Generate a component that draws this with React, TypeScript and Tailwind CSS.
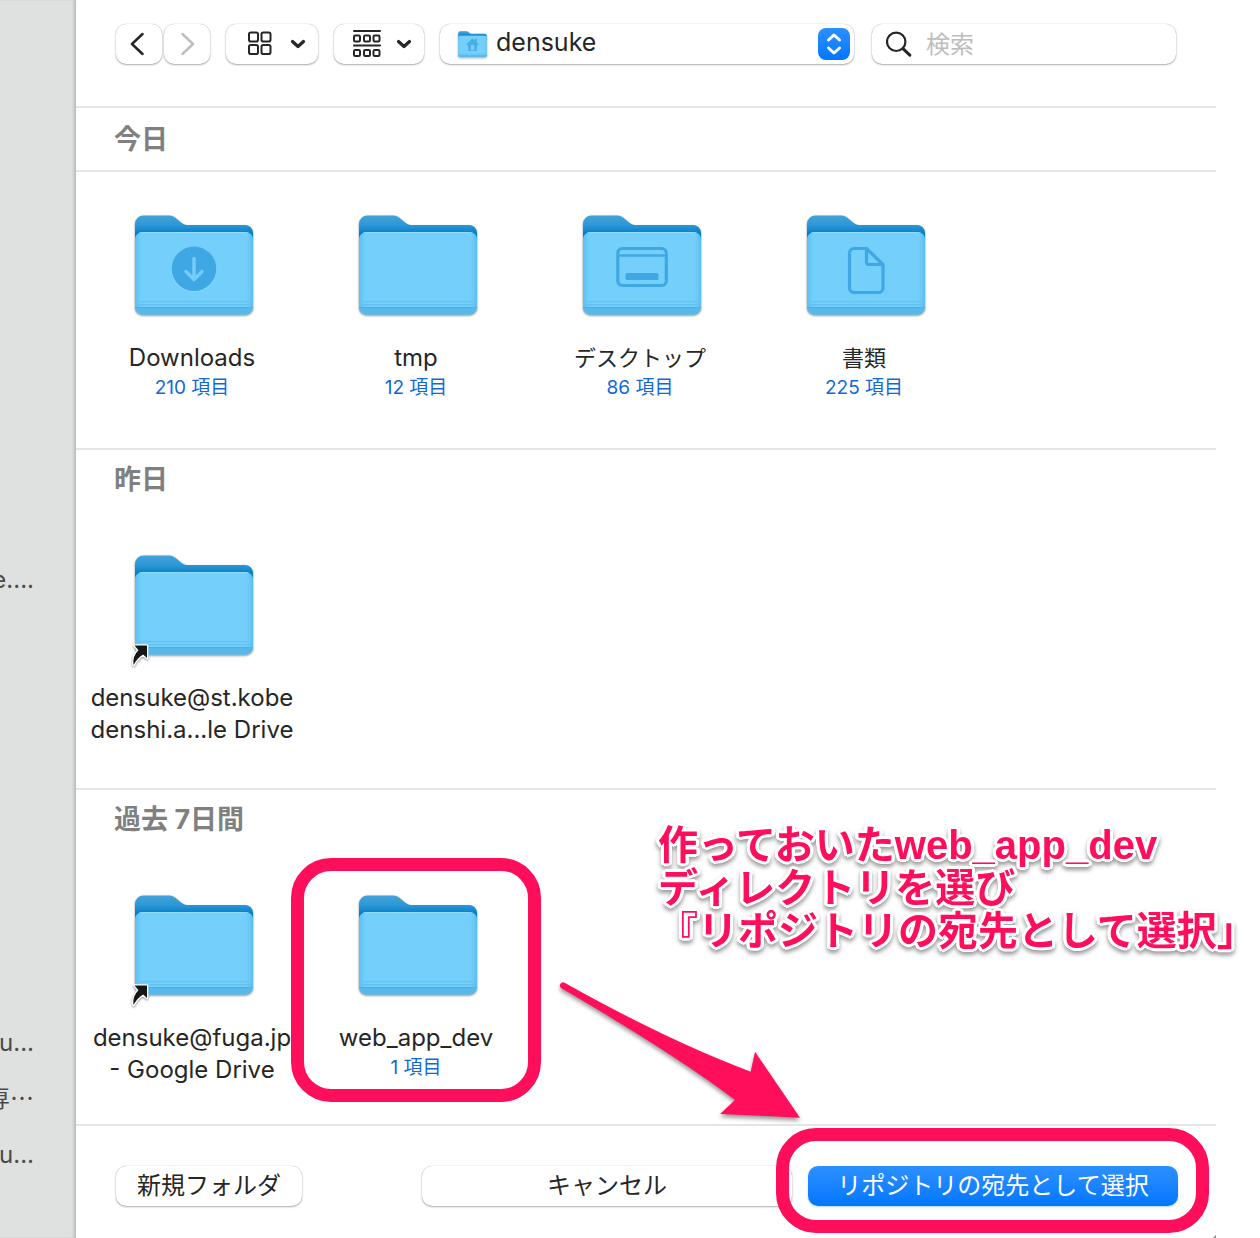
import { useId } from 'react'
import type { ReactNode } from 'react'

type Symbol = 'download' | 'desktop' | 'document' | 'home'

const raised =
  'bg-white shadow-[0_0_1px_rgba(0,0,0,0.35),0_1px_2px_rgba(0,0,0,0.3)]'

function FolderSymbol({ name }: { name: Symbol }) {
  const ink = '#3fa8e4'
  if (name === 'download')
    return (
      <g>
        <circle cx="66" cy="61.6" r="22.5" fill="#8ad7ff" />
        <circle cx="66" cy="60.8" r="22.3" fill={ink} />
        <path
          d="M66 50.500v21M58 63.500l8 8 8-8"
          fill="none"
          stroke="#74cdfb"
          strokeWidth="3.4"
          strokeLinecap="round"
          strokeLinejoin="round"
        />
      </g>
    )
  if (name === 'desktop')
    return (
      <g>
        <g fill="none" stroke={ink} strokeWidth="3.2">
          <rect x="41.800" y="40.500" width="48.500" height="37" rx="4.500" />
          <path d="M42 47.500h48" strokeWidth="2.6" />
        </g>
        <rect x="49.500" y="65" width="33" height="7" rx="1.500" fill={ink} />
      </g>
    )
  if (name === 'document')
    return (
      <path
        d="M66.500 40.500H54a4.500 4.500 0 0 0-4.500 4.500v35a4.500 4.500 0 0 0 4.500 4.500h24.500a4.500 4.500 0 0 0 4.500-4.500V56.500zV54a2.500 2.500 0 0 0 2.500 2.500h14"
        fill="none"
        stroke={ink}
        strokeWidth="3.2"
        strokeLinejoin="round"
      />
    )
  return (
    <path
      fillRule="evenodd"
      d="M66 34 40 58l4 4 4-4v25h36V58l4 4 4-4-8-8V36h-8v7zM59 80V64q0-6 7-6t7 6v16z"
      fill="#4aaee4"
    />
  )
}

function Folder({
  symbol,
  alias,
  small,
}: {
  symbol?: Symbol
  alias?: boolean
  small?: boolean
}) {
  const id = useId()
  return (
    <svg
      viewBox={small ? '6 7 120 102' : '0 0 128 112'}
      preserveAspectRatio="none"
      aria-hidden="true"
      className={
        small
          ? 'h-[27px] w-[29px] overflow-visible drop-shadow-[0_1px_1px_rgba(0,0,0,0.3)]'
          : 'h-28 w-32 overflow-visible drop-shadow-[0_1px_1px_rgba(0,0,0,0.45)]'
      }
    >
      <defs>
        <linearGradient id={id + 'b'} x1="0" y1="7" x2="0" y2="26" gradientUnits="userSpaceOnUse">
          <stop offset="0" stopColor="#45a3da" />
          <stop offset="0.5" stopColor="#2f98d6" />
          <stop offset="1" stopColor="#0080c8" />
        </linearGradient>
        <linearGradient id={id + 'e'} x1="0" y1="0" x2="1" y2="0">
          <stop offset="0" stopColor="#56bdf0" />
          <stop offset="0.07" stopColor="#73cefb" stopOpacity="0" />
          <stop offset="0.93" stopColor="#73cefb" stopOpacity="0" />
          <stop offset="1" stopColor="#56bdf0" />
        </linearGradient>
        <clipPath id={id + 'c'}>
          <rect x="7" y="24" width="118" height="82.500" rx="8" />
        </clipPath>
      </defs>
      <path
        d="M7 40V16a8.500 8.500 0 0 1 8.500-8.500H40c4.500 0 6.500 1.500 9.500 4 4 3.500 6 5.500 11 5.500H117a8 8 0 0 1 8 8v20z"
        fill={`url(#${id}b)`}
      />
      <g clipPath={`url(#${id}c)`}>
        <rect x="6" y="24" width="120" height="83" fill="#74cffb" />
        <rect x="7" y="24" width="118" height="83" fill={`url(#${id}e)`} />
        <rect x="6" y="24" width="120" height="1" fill="#8fdcff" />
        <rect x="6" y="93" width="120" height="1.300" fill="#64c3f3" />
        <rect x="6" y="96" width="120" height="1.300" fill="#60c0f0" />
        <rect x="6" y="99" width="120" height="8" fill="#57b9ea" />
        <rect x="6" y="99" width="120" height="1" fill="#4aafe2" />
      </g>
      {symbol && <FolderSymbol name={symbol} />}
      {alias && (
        <path
          d="M6.500 97.500h12.500v12.500l-3.800-3.500q-5.500 3-9.700 10.500-1.200-9 5-14.700z"
          fill="#161616"
          stroke="#fff"
          strokeWidth="2.6"
          strokeLinejoin="round"
          paintOrder="stroke"
        />
      )}
    </svg>
  )
}

function Tile({
  lines,
  count,
  symbol,
  alias,
  cjk,
  marked,
}: {
  lines: string[]
  count?: string
  symbol?: Symbol
  alias?: boolean
  cjk?: boolean
  marked?: boolean
}) {
  return (
    <li className="relative flex min-h-[200px] w-56 flex-col items-center text-center">
      <Folder symbol={symbol} alias={alias} />
      <div
        className={
          cjk
            ? 'mt-[22px] text-[22px] leading-8'
            : 'mt-[22px] text-[24px] leading-8'
        }
      >
        {lines.map((line) => (
          <div key={line} className="whitespace-nowrap">
            {line}
          </div>
        ))}
      </div>
      {count && (
        <div className="text-[19px] leading-7 text-[#1068d9]">{count} 項目</div>
      )}
      {marked && (
        <span className="pointer-events-none absolute -inset-x-[13px] -top-[30px] -bottom-[14px] z-10 rounded-[40px] border-[13px] border-[#ff0f5b]" />
      )}
    </li>
  )
}

function Heading({ children }: { children: ReactNode }) {
  return (
    <h2 className="flex h-15 items-center pl-[38px] text-[27px] leading-9 font-bold text-[#808080]">
      {children}
    </h2>
  )
}

function Chevron() {
  return (
    <svg viewBox="0 0 16 10" aria-hidden="true" className="h-[10px] w-4">
      <path
        d="M2.500 2.500 8 7.500l5.500-5"
        fill="none"
        stroke="#262626"
        strokeWidth="3.2"
        strokeLinecap="round"
        strokeLinejoin="round"
      />
    </svg>
  )
}

function SidebarItem({ text }: { text: string }) {
  return (
    <li className="flex h-14 items-center justify-end overflow-hidden pr-[42px] whitespace-nowrap">
      {text}
    </li>
  )
}

export default function App() {
  return (
    <div
      lang="ja"
      className="flex min-h-screen bg-white pr-11 font-['Inter','Noto_Sans_CJK_JP',sans-serif] text-[#262626]"
    >
      <aside className="w-[76px] shrink-0 bg-[#dfe1e0] pt-[552px] text-[24px] text-[#4a4c4b] shadow-[inset_-3px_0_3px_-1px_rgba(0,0,0,0.18)]">
        <ul>
          <SidebarItem text="e...." />
        </ul>
        <ul className="mt-[407px]">
          <SidebarItem text="u..." />
          <SidebarItem text="専⋯" />
          <SidebarItem text="u..." />
        </ul>
      </aside>

      <main className="relative min-w-0 flex-1">
        <header className="flex h-[108px] items-start border-b-2 border-[#e5e5e5] pt-6 pr-10 pl-10">
          <button aria-label="戻る" className={`flex h-10 w-[46px] items-center justify-center rounded-[10px] pr-1 ${raised}`}>
            <svg viewBox="0 0 14 24" aria-hidden="true" className="h-6 w-[14px]">
              <path d="M12.500 2 2 12l10.500 10" fill="none" stroke="#262626" strokeWidth="2.5" strokeLinecap="round" strokeLinejoin="round" />
            </svg>
          </button>
          <button aria-label="進む" className={`ml-[2px] flex h-10 w-[46px] items-center justify-center rounded-[10px] pl-[2px] ${raised}`}>
            <svg viewBox="0 0 14 24" aria-hidden="true" className="h-6 w-[14px]">
              <path d="m1.500 2 10.500 10-10.500 10" fill="none" stroke="#bfbfbf" strokeWidth="2.5" strokeLinecap="round" strokeLinejoin="round" />
            </svg>
          </button>
          <button aria-label="表示方法" className={`ml-4 flex h-10 w-[92px] items-center justify-between rounded-[10px] pr-3 pl-[21px] ${raised}`}>
            <svg viewBox="0 0 26 26" aria-hidden="true" className="h-[26px] w-[26px]">
              <g fill="none" stroke="#262626" strokeWidth="2">
                <rect x="2" y="1.500" width="9" height="9" rx="1.800" />
                <rect x="14.500" y="1.500" width="9" height="9" rx="1.800" />
                <rect x="2" y="14" width="9" height="9" rx="1.800" />
                <rect x="14.500" y="14" width="9" height="9" rx="1.800" />
              </g>
            </svg>
            <Chevron />
          </button>
          <button aria-label="グループ分け" className={`ml-4 flex h-10 w-[90px] items-center justify-between rounded-[10px] pr-3 pl-[18px] ${raised}`}>
            <svg viewBox="0 0 30 28" aria-hidden="true" className="h-7 w-[30px]">
              <g fill="none" stroke="#262626" strokeWidth="2">
                <path d="M2 1h26M2 15.500h26" strokeLinecap="round" />
                <rect x="2" y="5.500" width="6" height="6" rx="1.200" />
                <rect x="12" y="5.500" width="6" height="6" rx="1.200" />
                <rect x="21.500" y="5.500" width="6" height="6" rx="1.200" />
                <rect x="2" y="20" width="6" height="6" rx="1.200" />
                <rect x="12" y="20" width="6" height="6" rx="1.200" />
                <rect x="21.500" y="20" width="6" height="6" rx="1.200" />
              </g>
            </svg>
            <Chevron />
          </button>
          <div className={`relative ml-4 h-10 min-w-0 flex-1 rounded-[10px] ${raised}`}>
            <select aria-label="場所" className="h-full w-full appearance-none rounded-[10px] bg-transparent pr-11 pb-[2px] pl-14 text-[25px] outline-none">
              <option>densuke</option>
            </select>
            <span className="pointer-events-none absolute top-[7px] left-[18px]">
              <Folder symbol="home" small />
            </span>
            <span className="pointer-events-none absolute top-1 right-1 flex h-8 w-8 items-center justify-center rounded-lg bg-linear-to-b from-[#2b90ff] to-[#0076ff]">
              <svg viewBox="0 0 16 24" aria-hidden="true" className="h-6 w-4">
                <path d="m2.500 8 5.500-5 5.500 5M2.500 16l5.500 5 5.500-5" fill="none" stroke="#fff" strokeWidth="3" strokeLinecap="round" strokeLinejoin="round" />
              </svg>
            </span>
          </div>
          <label className={`ml-[18px] flex h-10 w-[304px] shrink-0 items-center rounded-[10px] pl-[14px] ${raised}`}>
            <svg viewBox="0 0 26 26" aria-hidden="true" className="h-[26px] w-[26px] shrink-0">
              <circle cx="10.200" cy="10.800" r="9.200" fill="none" stroke="#262626" strokeWidth="2.200" />
              <path d="m17 17.600 6.800 6.600" stroke="#262626" strokeWidth="3" strokeLinecap="round" />
            </svg>
            <input
              type="search"
              aria-label="検索"
              placeholder="検索"
              className="ml-[14px] h-10 w-full min-w-0 bg-transparent text-[24px] outline-none placeholder:text-[#bdbdbd]"
            />
          </label>
        </header>

        <section className="border-b-2 border-[#e5e5e5] pb-10">
          <div className="border-b-2 border-[#e5e5e5] pt-[2px]">
            <Heading>今日</Heading>
          </div>
          <ul className="flex flex-wrap pt-[36px] pl-1">
            <Tile lines={['Downloads']} count="210" symbol="download" />
            <Tile lines={['tmp']} count="12" />
            <Tile lines={['デスクトップ']} count="86" symbol="desktop" cjk />
            <Tile lines={['書類']} count="225" symbol="document" cjk />
          </ul>
        </section>

        <section className="border-b-2 border-[#e5e5e5] pb-10">
          <Heading>昨日</Heading>
          <ul className="flex flex-wrap pt-[38px] pl-1">
            <Tile lines={['densuke@st.kobe', 'denshi.a...le Drive']} alias />
          </ul>
        </section>

        <section className="relative border-b-2 border-[#e5e5e5] pb-9">
          <Heading>過去 7日間</Heading>
          <ul className="flex flex-wrap pt-[38px] pl-1">
            <Tile lines={['densuke@fuga.jp', '- Google Drive']} alias />
            <Tile lines={['web_app_dev']} count="1" marked />
          </ul>
          <p className="absolute top-[34px] left-[582px] font-['Liberation_Sans','Noto_Sans_CJK_JP',sans-serif] text-[40px] leading-[43px] font-bold whitespace-nowrap text-[#ff0f5b] drop-shadow-[0_3px_2px_rgba(0,0,0,0.4)] [text-shadow:3px_0_0_#fff,-3px_0_0_#fff,0_3px_0_#fff,0_-3px_0_#fff,2px_2px_0_#fff,-2px_2px_0_#fff,2px_-2px_0_#fff,-2px_-2px_0_#fff,3px_1px_0_#fff,3px_-1px_0_#fff,-3px_1px_0_#fff,-3px_-1px_0_#fff]">
            作っておいたweb_app_dev
            <br />
            ディレクトリを選び
            <br />
            『リポジトリの宛先として選択」
          </p>
          <svg
            viewBox="60 60 729 426"
            aria-hidden="true"
            className="absolute top-[190px] left-[484px] h-[142px] w-[243px] overflow-visible drop-shadow-[0_3px_2px_rgba(0,0,0,0.4)]"
          >
            <path
              d="M75 69Q380 240 632 335L645 275 780 473 540 462 585 420Q400 280 64 85A9 9 0 0 1 75 69Z"
              fill="#ff0f5b"
            />
          </svg>
        </section>

        <footer className="flex items-start pt-10 pr-[38px] pb-8 pl-10 text-[24px] leading-10">
          <button className={`h-10 w-[186px] rounded-[10px] ${raised}`}>新規フォルダ</button>
          <button className={`ml-auto h-10 w-[370px] rounded-[10px] ${raised}`}>キャンセル</button>
          <div className="relative ml-4">
            <button className="h-10 w-[370px] rounded-[10px] bg-linear-to-b from-[#2b90ff] to-[#0076ff] text-white shadow-[0_1px_2px_rgba(0,118,255,0.3)]">
              リポジトリの宛先として選択
            </button>
            <span className="pointer-events-none absolute -top-[38px] -right-[31px] -bottom-[27px] -left-[32px] rounded-[40px] border-[13px] border-[#ff0f5b]" />
          </div>
        </footer>
        <svg viewBox="0 0 3 3" aria-hidden="true" className="absolute right-0 bottom-0 h-[3px] w-[3px]">
          <path d="M3 0v3H0z" fill="#8c8c8c" />
        </svg>
      </main>
    </div>
  )
}
